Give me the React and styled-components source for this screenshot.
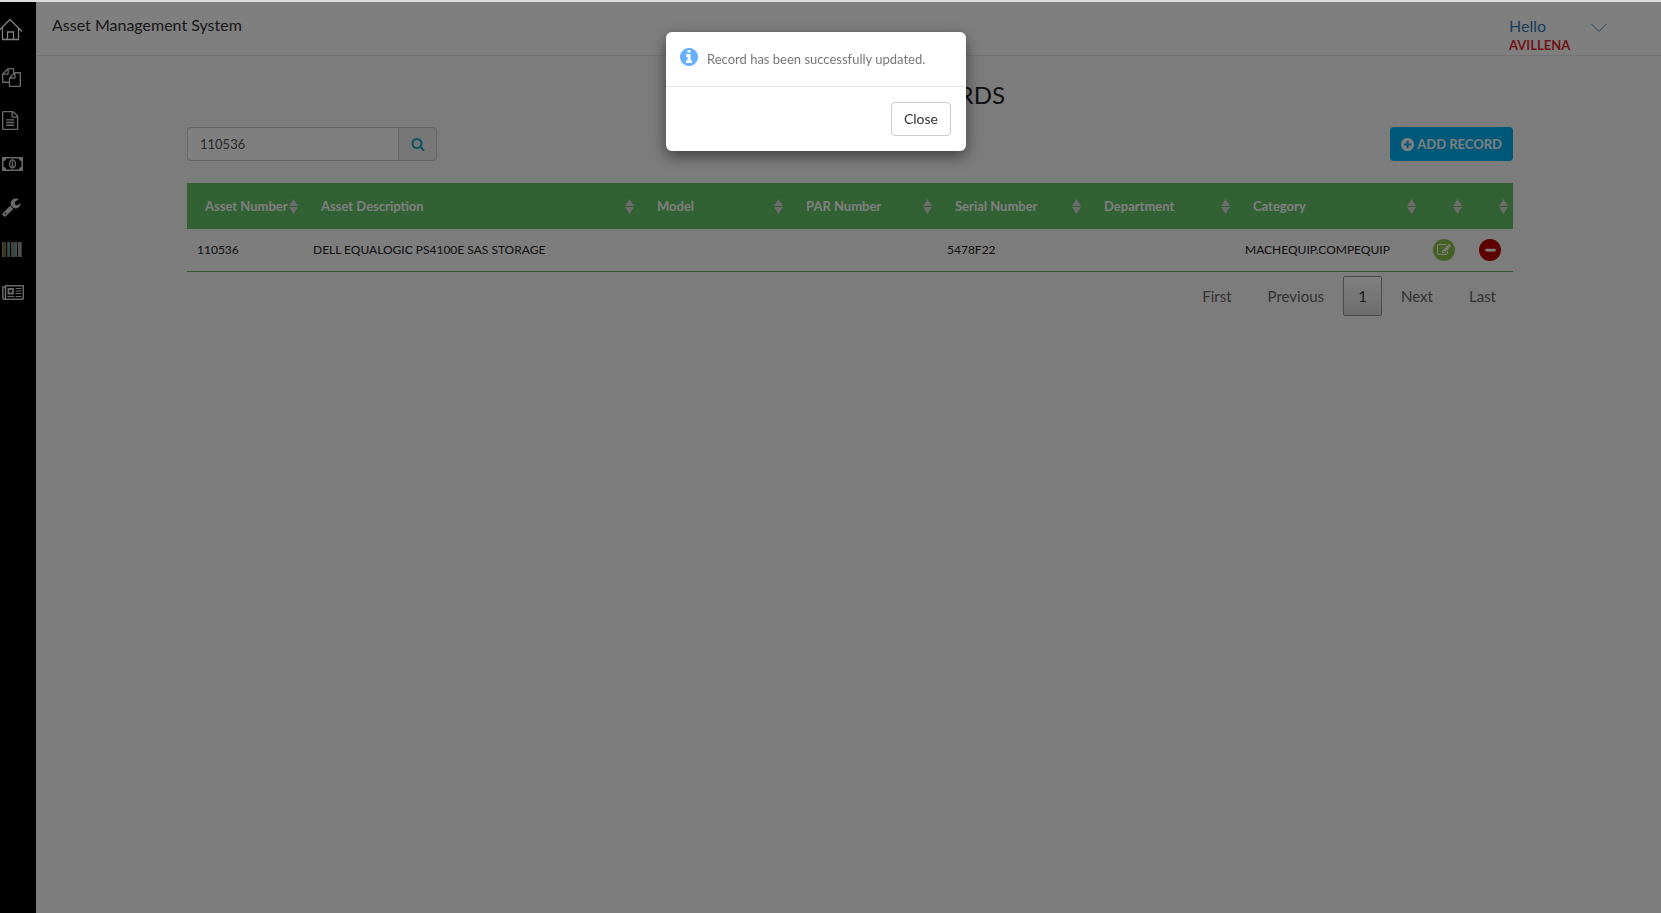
import React from "react";
import styled, { createGlobalStyle } from "styled-components";

const GlobalStyle = createGlobalStyle`
  *, *::before, *::after { box-sizing: border-box; }
  html, body, #root { height: 100%; }
  body {
    margin: 0;
    background: #f9f9f9;
    color: #333;
    font-family: Lato, "Liberation Sans", sans-serif;
    font-size: 14px;
    line-height: 20px;
  }
  button, input { font: inherit; color: inherit; }
`;

const Page = styled.div`
  display: flex;
  min-height: 100%;
  border-top: 2px solid #dcdcdc;
`;

const Sidebar = styled.nav`
  flex: none;
  width: 36px;
  background: #000;
  padding-top: 15px;
`;

const SideList = styled.ul`
  list-style: none;
  margin: 0;
  padding: 0;
`;

const SideItem = styled.li`
  height: ${(p) => (p.$home ? 39 : 43)}px;
`;

const SideLink = styled.a`
  display: flex;
  align-items: center;
  height: ${(p) => (p.$home ? 24 : 43)}px;
  padding-left: ${(p) => (p.$home ? 0 : 2)}px;
  color: ${(p) => (p.$home ? "#fff" : "#d2d2d2")};
`;

const Main = styled.div`
  flex: 1;
  min-width: 0;
`;

const TopBar = styled.header`
  display: flex;
  justify-content: space-between;
  height: 54px;
  padding: 14px 53px 0 16px;
  background: #fff;
  border-bottom: 1px solid #e7e7e7;
`;

const Brand = styled.span`
  font-size: 16px;
  line-height: 18px;
`;

const UserLink = styled.a`
  display: flex;
  justify-content: space-between;
  width: 99px;
  color: #337ab7;
  text-decoration: none;
`;

const Greeting = styled.span`
  font-size: 16px;
  line-height: 20px;
`;

const UserName = styled.span`
  display: block;
  color: #e02b2b;
  font-size: 13px;
  font-weight: 700;
  line-height: 18px;
`;

const Caret = styled.svg`
  margin: 7px 1px 0 0;
`;

const Content = styled.main`
  padding: 23px 148px 0 151px;
`;

const Title = styled.h1`
  margin: 0;
  color: #222;
  text-align: center;
  font-size: 24px;
  font-weight: 400;
  line-height: 32px;
`;

const Toolbar = styled.div`
  display: flex;
  justify-content: space-between;
  margin: 16px 0 22px;
`;

const SearchForm = styled.form`
  display: flex;
  width: 250px;
  height: 34px;
`;

const SearchInput = styled.input`
  flex: 1;
  min-width: 0;
  padding: 6px 12px;
  color: #555;
  font-size: 13px;
  background: #fff;
  border: 1px solid #ccc;
  border-right: 0;
  border-radius: 4px 0 0 4px;
`;

const SearchButton = styled.button`
  display: flex;
  align-items: center;
  justify-content: center;
  width: 39px;
  padding: 0;
  color: #1ba8c4;
  background: #eee;
  border: 1px solid #ccc;
  border-radius: 0 4px 4px 0;
`;

const AddButton = styled.button`
  display: flex;
  align-items: center;
  gap: 3px;
  height: 34px;
  padding: 0 11px;
  color: #fff;
  font-size: 13px;
  font-weight: 700;
  background: #00b0f0;
  border: 0;
  border-radius: 4px;
`;

const Table = styled.table`
  width: 100%;
  table-layout: fixed;
  border-collapse: separate;
  border-spacing: 0;
  border-bottom: 1px solid #5cb85c;
`;

const Col = styled.col`
  width: ${(p) => (p.$w ? `${p.$w}px` : "auto")};
`;

const HeadCell = styled.th`
  height: 46px;
  padding: 0;
  background: #64c267;
  text-align: left;
`;

const SortButton = styled.button`
  display: flex;
  align-items: center;
  justify-content: space-between;
  width: 100%;
  height: 46px;
  padding: 0 5px 0 18px;
  color: #fff;
  font-size: 13px;
  font-weight: 700;
  white-space: nowrap;
  background: none;
  border: 0;
`;

const Cell = styled.td`
  height: 42px;
  padding: 0 10px;
  color: #222;
  font-size: 12px;
  background: #fbfbfb;
  white-space: nowrap;
`;

const RoundButton = styled.button`
  display: flex;
  align-items: center;
  justify-content: center;
  width: 22px;
  height: 22px;
  padding: 0;
  margin-left: 2px;
  color: #fff;
  background: ${(p) => (p.$danger ? "#b80000" : "#8bc34a")};
  border: 0;
  border-radius: 50%;
`;

const Pager = styled.nav`
  display: flex;
  justify-content: flex-end;
  gap: 2px;
  padding-top: 4px;
`;

const PageButton = styled.button`
  min-width: 39px;
  height: 40px;
  padding: 0 ${(p) => (p.$current ? 14 : 16)}px;
  color: ${(p) => (p.$current ? "#333" : "#666")};
  font-size: 15px;
  background: ${(p) => (p.$current ? "linear-gradient(#fff, #dcdcdc)" : "none")};
  border: 1px solid ${(p) => (p.$current ? "#979797" : "transparent")};
  border-radius: 2px;
`;

const Backdrop = styled.div`
  position: fixed;
  inset: 2px 0 0;
  display: flex;
  align-items: flex-start;
  justify-content: center;
  padding: 30px 29px 0 0;
  background: rgba(0, 0, 0, 0.5);
`;

const Dialog = styled.div`
  width: 300px;
  background: #fff;
  border-radius: 6px;
  box-shadow: 0 5px 15px rgba(0, 0, 0, 0.5);
`;

const DialogBody = styled.div`
  display: flex;
  align-items: flex-start;
  gap: 9px;
  height: 55px;
  padding: 16px 14px;
  border-bottom: 1px solid #e5e5e5;
`;

const DialogText = styled.p`
  margin: 1px 0 0;
  color: #777;
  font-size: 13px;
  white-space: nowrap;
`;

const DialogFooter = styled.div`
  display: flex;
  justify-content: flex-end;
  padding: 15px;
`;

const CloseButton = styled.button`
  height: 34px;
  padding: 0 12px;
  color: #333;
  background: #fff;
  border: 1px solid #ccc;
  border-radius: 4px;
`;

const circle =
  "m0 0q0 209-103 385.500t-279.500 279.500-385.500 103-385.500-103-279.500-279.500-103-385.500 103-385.500 279.500-279.500 385.500-103 385.500 103 279.500 279.500 103 385.500z";

const glyphs = {
  files:
    "M1696 384q40 0 68 28t28 68v1216q0 40-28 68t-68 28h-960q-40 0-68-28t-28-68v-288h-544q-40 0-68-28t-28-68v-672q0-40 20-88t48-76l408-408q28-28 76-48t88-20h416q40 0 68 28t28 68v328q68-40 128-40h416zm-544 213l-299 299h299v-299zm-640-384l-299 299h299v-299zm196 647l316-316v-416h-384v416q0 40-28 68t-68 28h-416v640h512v-256q0-40 20-88t48-76zm956 804v-1152h-384v416q0 40-28 68t-68 28h-416v640h896z",
  file:
    "M1468 380q28 28 48 76t20 88v1152q0 40-28 68t-68 28h-1344q-40 0-68-28t-28-68v-1600q0-40 28-68t68-28h896q40 0 88 20t76 48zm-444-244v376h376q-10-29-22-41l-313-313q-12-12-41-22zm384 1528v-1024h-416q-40 0-68-28t-28-68v-416h-768v1536h1280zm-1024-864q0-14 9-23t23-9h704q14 0 23 9t9 23v64q0 14-9 23t-23 9h-704q-14 0-23-9t-9-23v-64zm736 224q14 0 23 9t9 23v64q0 14-9 23t-23 9h-704q-14 0-23-9t-9-23v-64q0-14 9-23t23-9h704zm0 256q14 0 23 9t9 23v64q0 14-9 23t-23 9h-704q-14 0-23-9t-9-23v-64q0-14 9-23t23-9h704z",
  wrench:
    "M448 1472q0-26-19-45t-45-19-45 19-19 45 19 45 45 19 45-19 19-45zm644-420l-682 682q-37 37-90 37-52 0-91-37l-106-108q-38-36-38-90 0-53 38-91l681-681q39 98 114.500 173.500t173.500 114.500zm634-435q0 39-23 106-47 134-164.500 217.500t-258.500 83.500q-185 0-316.500-131.500t-131.500-316.500 131.500-316.500 316.500-131.500q58 0 121.500 16.500t107.500 46.500q16 11 16 28t-16 28l-293 169v224l193 107q5-3 79-48.500t135.500-81 70.500-35.500q15 0 23.500 10t8.500 25z",
  search:
    "M1216 832q0-185-131.500-316.500t-316.500-131.500-316.500 131.500-131.500 316.500 131.500 316.500 316.500 131.500 316.500-131.500 131.500-316.500zm512 832q0 52-38 90t-90 38q-54 0-90-38l-343-342q-179 124-399 124-143 0-273.500-55.500t-225-150-150-225-55.500-273.500 55.500-273.500 150-225 225-150 273.500-55.500 273.500 55.500 225 150 150 225 55.500 273.500q0 220-124 399l343 343q37 37 37 90z",
  edit:
    "M888 1184l116-116-152-152-116 116v56h96v96h56zm440-720q-16-16-33 1l-350 350q-17 17-1 33t33-1l350-350q17-17 1-33zm80 594v190q0 119-84.500 203.500t-203.500 84.500h-832q-119 0-203.500-84.500t-84.500-203.500v-832q0-119 84.500-203.500t203.500-84.500h832q63 0 117 25 15 7 18 23 3 17-9 29l-49 49q-14 14-32 8-23-6-45-6h-832q-66 0-113 47t-47 113v832q0 66 47 113t113 47h832q66 0 113-47t47-113v-126q0-13 9-22l64-64q15-15 35-7t20 29zm-96-738l288 288-672 672h-288v-288zm444 132l-92 92-288-288 92-92q28-28 68-28t68 28l152 152q28 28 28 68t-28 68z",
  minus:
    "M1600 736v192q0 40-28 68t-68 28h-1216q-40 0-68-28t-28-68v-192q0-40 28-68t68-28h1216q40 0 68 28t28 68z",
  info:
    "M1152 1376v-160q0-14-9-23t-23-9h-96v-512q0-14-9-23t-23-9h-320q-14 0-23 9t-9 23v160q0 14 9 23t23 9h96v320h-96q-14 0-23 9t-9 23v160q0 14 9 23t23 9h448q14 0 23-9t9-23zm-128-896v-160q0-14-9-23t-23-9h-192q-14 0-23 9t-9 23v160q0 14 9 23t23 9h192q14 0 23-9t9-23zm640 416" +
    circle,
  plus:
    "M1344 960v-128q0-26-19-45t-45-19h-256v-256q0-26-19-45t-45-19h-128q-26 0-45 19t-19 45v256h-256q-26 0-45 19t-19 45v128q0 26 19 45t45 19h256v256q0 26 19 45t45 19h128q26 0 45-19t19-45v-256h256q26 0 45-19t19-45zm320-64" +
    circle,
};

function Glyph({ name, size, box = "0 0 1792 1792", color = "currentColor" }) {
  return (
    <svg width={size} height={size} viewBox={box} fill={color} aria-hidden="true">
      <path d={glyphs[name]} />
    </svg>
  );
}

const HomeIcon = () => (
  <svg
    width="24"
    height="24"
    viewBox="0 0 24 24"
    fill="none"
    stroke="currentColor"
    strokeWidth="1.300"
    aria-hidden="true"
  >
    <path d="M-1 13.500L10 2.500l12 12M2.500 11v11.500h16V11M7.500 22v-7h6v7" />
  </svg>
);

const MoneyIcon = () => (
  <svg width="21" height="14" viewBox="0 0 21 14" aria-hidden="true">
    <path
      fill="currentColor"
      fillRule="evenodd"
      d="M0 0h21v14H0zM4 1.500Q4 4 1.500 4v6Q4 10 4 12.500h13Q17 10 19.500 10V4Q17 4 17 1.500z"
    />
    <ellipse cx="10.500" cy="7" rx="3" ry="4" fill="none" stroke="currentColor" strokeWidth="1.400" />
    <path d="M9.500 5.500l1-1V9M9 9.200h3" fill="none" stroke="currentColor" />
  </svg>
);

const bars = [
  ["#8c8c8c", 0, 1], ["#6e6a3a", 1, 2], ["#7d8a4a", 3, 1], ["#9a5aa0", 5, 1], ["#4fa0a0", 6, 2],
  ["#a87848", 9, 1], ["#9b9b4a", 10, 1], ["#7f5f9f", 11, 1], ["#5f9f9f", 12, 2], ["#a0a0a0", 14, 1],
  ["#b0a8a0", 16, 1], ["#8fa0a0", 17, 2], ["#a05a4a", 19, 1],
];

const BarcodeIcon = () => (
  <svg width="20" height="15" viewBox="0 0 20 15" aria-hidden="true">
    {bars.map(([fill, x, width]) => (
      <rect key={x} x={x} width={width} height="15" fill={fill} />
    ))}
  </svg>
);

const NewsIcon = () => (
  <svg width="22" height="15" viewBox="0 0 22 15" fill="none" stroke="currentColor" aria-hidden="true">
    <path
      d="M3.500 2H.8v10.500q0 1.800 1.800 1.800h17.200q1.500 0 1.500-1.500V.8H3.500v12q0 1.500-1.500 1.500"
      strokeWidth="1.500"
    />
    <path d="M6.500 4h4.500v4.500H6.500z" strokeWidth="1.800" />
    <path d="M13.500 3.500h6M13.500 6h6M13.500 8.500h6M5.500 11.500H12M13.500 11.500h6" strokeWidth="1.200" />
  </svg>
);

const SortIcon = () => (
  <svg width="9" height="15" viewBox="0 0 9 15" fill="#d8d8d8" aria-hidden="true">
    <path d="M4.500 0L9 7H0zM0 8h9l-4.500 7z" />
  </svg>
);

const menu = [
  ["Home", <HomeIcon />],
  ["Copies", <Glyph name="files" size={19} />],
  ["Documents", <Glyph name="file" size={19} />],
  ["Finance", <MoneyIcon />],
  ["Maintenance", <Glyph name="wrench" size={20} box="60 0 1792 1792" />],
  ["Barcodes", <BarcodeIcon />],
  ["News", <NewsIcon />],
];

const columns = [
  ["Asset Number", 116],
  ["Asset Description", null],
  ["Model", 149],
  ["PAR Number", 149],
  ["Serial Number", 149],
  ["Department", 149],
  ["Category", 186],
  ["", 46],
  ["", 46],
];

const record = ["110536", "DELL EQUALOGIC PS4100E SAS STORAGE", "", "", "5478F22", "", "MACHEQUIP.COMPEQUIP"];

export default function App() {
  return (
    <>
      <GlobalStyle />
      <Page>
        <Sidebar aria-label="Main">
          <SideList>
            {menu.map(([label, icon], i) => (
              <SideItem key={label} $home={i === 0}>
                <SideLink href="#" aria-label={label} $home={i === 0}>
                  {icon}
                </SideLink>
              </SideItem>
            ))}
          </SideList>
        </Sidebar>
        <Main>
          <TopBar>
            <Brand>Asset Management System</Brand>
            <UserLink href="#">
              <Greeting>
                Hello
                <UserName>AVILLENA</UserName>
              </Greeting>
              <Caret width="16" height="10" viewBox="0 0 16 10" fill="none" stroke="#3f9fb5" aria-hidden="true">
                <path d="M.5 1L8 8.500 15.500 1" />
              </Caret>
            </UserLink>
          </TopBar>
          <Content>
            <Title>COMPANY ASSET RECORDS</Title>
            <Toolbar>
              <SearchForm>
                <SearchInput aria-label="Search records" defaultValue="110536" />
                <SearchButton type="button" aria-label="Search">
                  <Glyph name="search" size={14} />
                </SearchButton>
              </SearchForm>
              <AddButton type="button">
                <Glyph name="plus" size={13} box="128 128 1536 1536" />
                ADD RECORD
              </AddButton>
            </Toolbar>
            <Table>
              <colgroup>
                {columns.map(([, w], i) => (
                  <Col key={i} $w={w} />
                ))}
              </colgroup>
              <thead>
                <tr>
                  {columns.map(([label], i) => (
                    <HeadCell key={i} scope="col">
                      <SortButton type="button" aria-label={label || "Sort"}>
                        <span>{label}</span>
                        <SortIcon />
                      </SortButton>
                    </HeadCell>
                  ))}
                </tr>
              </thead>
              <tbody>
                <tr>
                  {record.map((value, i) => (
                    <Cell key={i}>{value}</Cell>
                  ))}
                  <Cell>
                    <RoundButton type="button" aria-label="Edit">
                      <Glyph name="edit" size={14} />
                    </RoundButton>
                  </Cell>
                  <Cell>
                    <RoundButton type="button" aria-label="Remove" $danger>
                      <Glyph name="minus" size={13} />
                    </RoundButton>
                  </Cell>
                </tr>
              </tbody>
            </Table>
            <Pager aria-label="Pagination">
              <PageButton type="button">First</PageButton>
              <PageButton type="button">Previous</PageButton>
              <PageButton type="button" $current>1</PageButton>
              <PageButton type="button">Next</PageButton>
              <PageButton type="button">Last</PageButton>
            </Pager>
          </Content>
        </Main>
      </Page>
      <Backdrop>
        <Dialog role="dialog" aria-modal="true" aria-labelledby="dialog-text">
          <DialogBody>
            <Glyph name="info" size={18} box="128 128 1536 1536" color="#66b0ff" />
            <DialogText id="dialog-text">Record has been successfully updated.</DialogText>
          </DialogBody>
          <DialogFooter>
            <CloseButton type="button">Close</CloseButton>
          </DialogFooter>
        </Dialog>
      </Backdrop>
    </>
  );
}
